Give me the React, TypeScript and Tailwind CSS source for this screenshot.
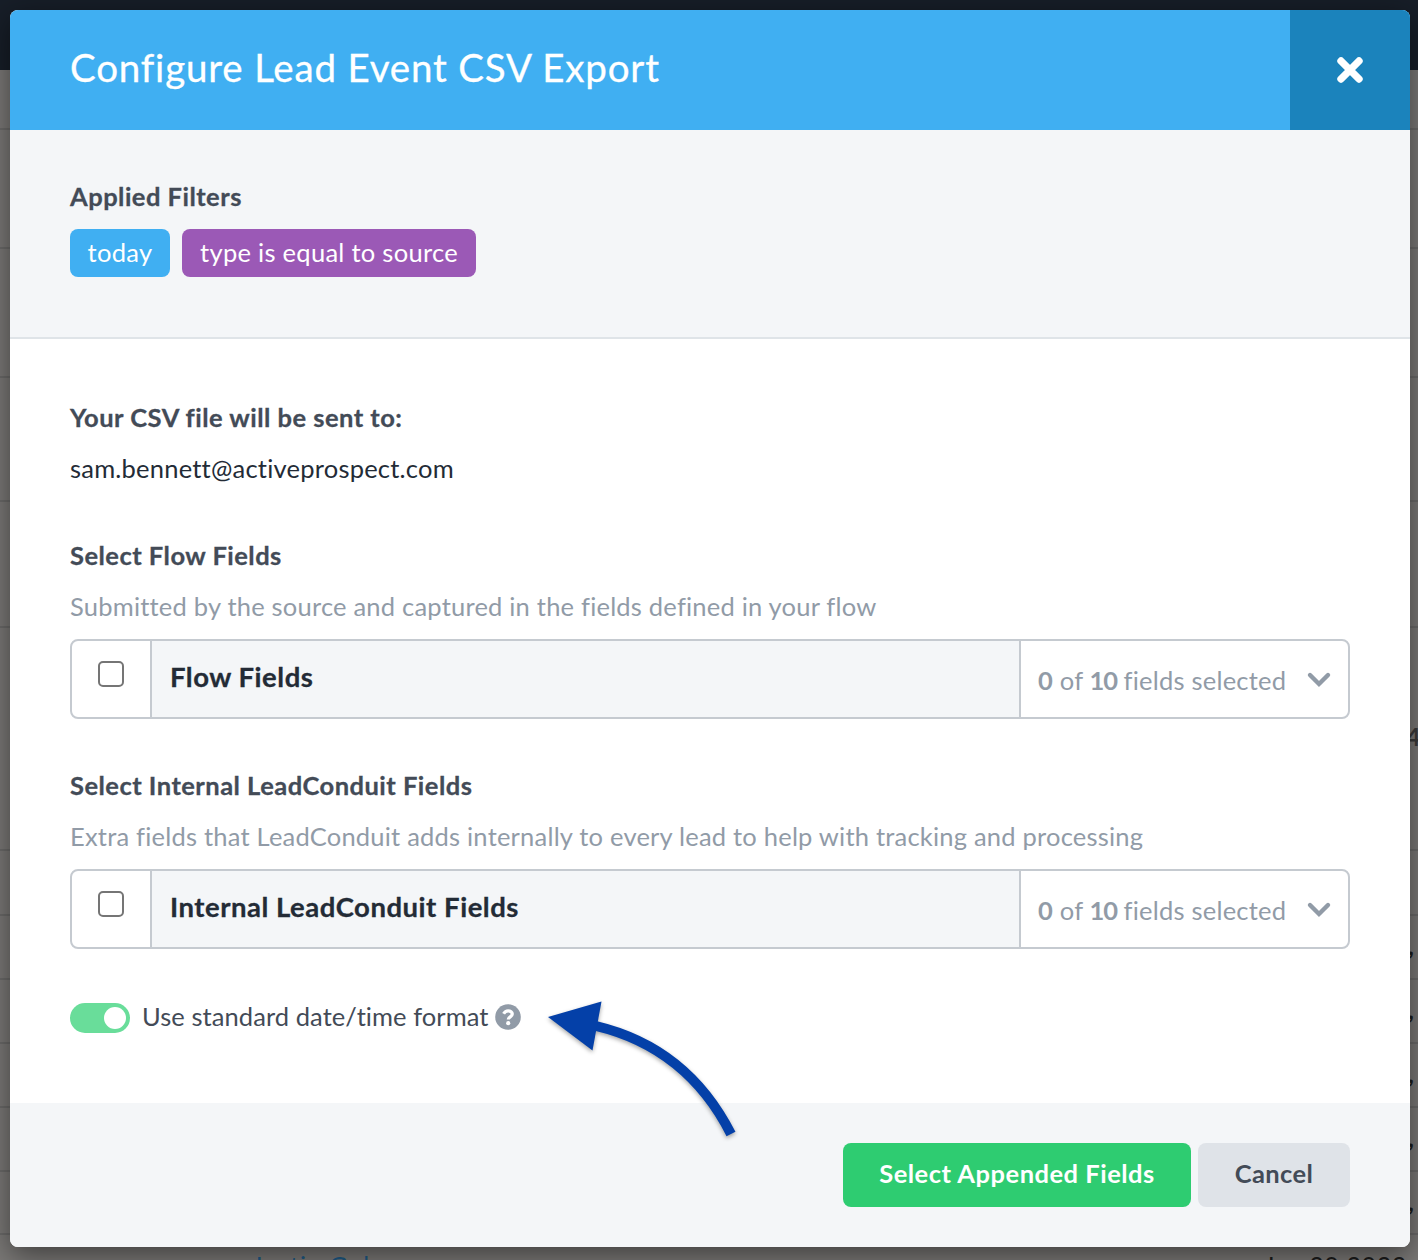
import type { ReactNode } from "react";

const rowLines = [
  "top-[128px]", "top-[247px]", "top-[376px]", "top-[500px]", "top-[626px]", "top-[849px]",
  "top-[914px]", "top-[978px]", "top-[1042px]", "top-[1106px]", "top-[1170px]", "top-[1233px]",
];
const commas = ["top-[930px]", "top-[994px]", "top-[1058px]", "top-[1122px]", "top-[1186px]"];

function Backdrop() {
  return (
    <div className="absolute inset-0 bg-[#7b7977]">
      <div className="h-[70px] bg-[#171e28]" />
      {rowLines.map((c) => (
        <div key={c} className={`absolute inset-x-0 h-[2px] bg-[#6c6b6a] ${c}`} />
      ))}
      <span className="absolute left-[1406px] top-[721px] text-[25px] font-bold leading-[30px] text-[#3a3a3a]">4</span>
      {commas.map((c) => (
        <span key={c} className={`absolute left-[1408px] text-[25px] font-bold leading-[30px] text-[#1c1c1c] ${c}`}>,</span>
      ))}
      <span className="absolute left-[252px] top-[1250px] text-[25px] leading-[30px] tracking-[1px] text-[#1d5a86]">Justin Gulz</span>
      <span className="absolute left-[1264px] top-[1250px] text-[25px] leading-[30px] tracking-[0.6px] text-[#1c1c1c]">Jan 30 2023</span>
    </div>
  );
}

function Heading({ children }: { children: ReactNode }) {
  return (
    <h2 className="text-[25.5px] font-bold leading-[30px] tracking-[0.48px] text-[#434b57] [-webkit-text-stroke:0.3px_#434b57]">
      {children}
    </h2>
  );
}

function FieldGroup({ title, hint, name }: { title: string; hint: string; name: string }) {
  return (
    <section>
      <Heading>{title}</Heading>
      <p className="mt-[21px] whitespace-nowrap text-[25.5px] leading-[30px] tracking-[0.21px] text-[#919ba7]">{hint}</p>
      <div className="mt-[18px] flex h-20 overflow-hidden rounded-lg border-2 border-[#c5cad0] bg-white">
        <div className="flex w-20 shrink-0 justify-center border-r-2 border-[#c5cad0] pt-5">
          <span className="size-[26px] rounded-[5px] border-2 border-[#757575] bg-white" />
        </div>
        <div className="flex flex-1 items-center bg-[#f4f6f8] pb-[4px] pl-[18px] text-[27.5px] font-bold tracking-[0.52px] text-[#232b36] [-webkit-text-stroke:0.3px_#232b36]">{name}</div>
        <div className="flex w-[329px] shrink-0 items-center justify-between border-l-2 border-[#c5cad0] pl-[17px] pr-[16px] text-[25.5px] tracking-[0.22px] text-[#919ba7]">
          <span className="whitespace-nowrap pt-[2px]"><b>0</b> of <b className="tracking-[-1.2px]">10</b> fields selected</span>
          <svg width="26" height="18" viewBox="0 0 26 18" className="mb-px" fill="none">
            <path d="M4 5l9 9 9-9" stroke="#919ba7" strokeWidth="4.4" strokeLinecap="round" strokeLinejoin="miter" />
          </svg>
        </div>
      </div>
    </section>
  );
}

export default function App() {
  return (
    <div className="relative h-[1260px] w-[1418px] overflow-hidden font-['Lato',sans-serif]">
      <Backdrop />
      <div className="relative ml-[10px] mt-[10px] flex h-[1237px] w-[1400px] flex-col overflow-hidden rounded-lg bg-white shadow-[0_8px_30px_rgba(0,0,0,0.5)]">
        <header className="flex h-[120px] shrink-0 bg-[#40aff2]">
          <h1 className="flex flex-1 items-center pb-[4px] pl-[60px] text-[38.5px] tracking-[0.82px] text-white [-webkit-text-stroke:0.3px_white]">Configure Lead Event CSV Export</h1>
          <button className="flex w-[120px] items-center justify-center bg-[#1b83bc]">
            <svg width="28" height="28" viewBox="0 0 28 28" className="mb-px">
              <path d="M5 5l18 18M23 5L5 23" stroke="white" strokeWidth="7.4" strokeLinecap="round" />
            </svg>
          </button>
        </header>

        <section className="h-[209px] shrink-0 border-b-2 border-[#dfe4e8] bg-[#f4f6f8] px-[60px] pt-[51px]">
          <Heading>Applied Filters</Heading>
          <div className="mt-[18px] flex gap-3 text-[25.5px] leading-[30px] text-white">
            <span className="flex h-12 w-[100px] items-center justify-center rounded-lg bg-[#40aff2] pb-[3px] tracking-[0.3px]">today</span>
            <span className="flex h-12 w-[294px] items-center justify-center rounded-lg bg-[#9b59b6] pb-[3px] tracking-[0.28px]">type is equal to source</span>
          </div>
        </section>

        <main className="flex-1 px-[60px] pt-[63px]">
          <Heading>Your CSV file will be sent to:</Heading>
          <p className="mb-[57px] mt-[21px] text-[25.5px] leading-[30px] tracking-[0.22px] text-[#232b36]">sam.bennett@activeprospect.com</p>
          <div className="flex flex-col gap-[51px]">
            <FieldGroup title="Select Flow Fields" hint="Submitted by the source and captured in the fields defined in your flow" name="Flow Fields" />
            <FieldGroup title="Select Internal LeadConduit Fields" hint="Extra fields that LeadConduit adds internally to every lead to help with tracking and processing" name="Internal LeadConduit Fields" />
          </div>
          <div className="mt-[54px] flex h-[30px] items-center">
            <span className="flex h-[30px] w-[60px] items-center justify-end rounded-full bg-[#69dd9a] pr-1">
              <span className="size-[22px] rounded-full bg-white" />
            </span>
            <span className="ml-3 w-[352.500px] whitespace-nowrap pb-[4px] text-[25.5px] leading-[30px] tracking-[0.07px] text-[#434b57]">Use standard date/time format</span>
            <svg width="26" height="26" viewBox="0 0 26 26" className="mb-[2px]" fill="none">
              <circle cx="13" cy="13" r="12.8" fill="#919ba7" />
              <path d="M8.600 9.800C9.8 7.600 11.200 6.800 13.100 6.800c2.400 0 4.200 1.300 4.200 3.300 0 2.700-4 2.800-4 5.300" stroke="white" strokeWidth="3.200" />
              <circle cx="13.2" cy="19.200" r="2.100" fill="white" />
            </svg>
          </div>
        </main>

        <footer className="flex h-[144px] shrink-0 justify-end gap-[7px] bg-[#f4f6f8] px-[60px] pt-10 text-[25.5px] font-bold">
          <button className="flex h-16 w-[348px] items-center justify-center rounded-lg bg-[#2ecc71] pb-[4px] tracking-[0.5px] text-white">Select Appended Fields</button>
          <button className="flex h-16 w-[152px] items-center justify-center rounded-lg bg-[#dfe3e8] pb-[4px] tracking-[0.4px] text-[#434b57]">Cancel</button>
        </footer>
      </div>

      <svg width="240" height="180" viewBox="0 0 240 180" className="absolute left-[520px] top-[980px] drop-shadow-[0_2px_2px_rgba(0,0,0,0.35)]" fill="none">
        <path d="M76 46C139 61 183 99 211 154" stroke="#0440a8" strokeWidth="10" />
        <path d="M28 37L81.500 21.500L72.500 70.500Z" fill="#0440a8" />
      </svg>
    </div>
  );
}
